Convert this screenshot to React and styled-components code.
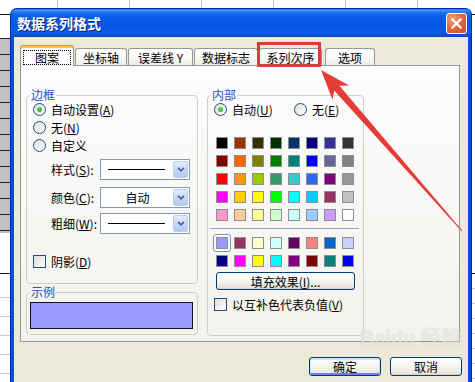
import React from 'react';
import styled, { createGlobalStyle, css } from 'styled-components';

const FONT = '"Noto Sans CJK SC", "Noto Sans", sans-serif';

const Global = createGlobalStyle`
  html, body { margin: 0; padding: 0; background: #fff; }
  body { font-family: ${FONT}; font-size: 12px; color: #000; }
  * { box-sizing: border-box; }
`;

const Screen = styled.div`
  position: relative;
  width: 475px;
  height: 382px;
  overflow: hidden;
  display: flex;
  align-items: flex-start;
  background: #fff linear-gradient(to right, #c4c4c4 1px, transparent 1px) 57px 0 / 72px 100% repeat-x;
`;

const LeftStrip = styled.div`
  flex: none;
  width: 10px;
  height: 382px;
  background:
    linear-gradient(#1a1a1a, #1a1a1a) 0 14px / 100% 1px no-repeat,
    repeating-linear-gradient(#202020 0 1px, transparent 1px 16px) 0 38px / 100% 195px no-repeat,
    linear-gradient(#c0c0c0, #c0c0c0) 0 38px / 100% 195px no-repeat,
    linear-gradient(#1a1a1a, #1a1a1a) 0 273px / 100% 1px no-repeat,
    repeating-linear-gradient(#c8c8c8 0 1px, transparent 1px 19px) 0 297px / 100% 90px no-repeat,
    #fff;
`;

const RightStrip = styled.div`
  flex: none;
  width: 3px;
  height: 382px;
  background:
    linear-gradient(#1a1a1a, #1a1a1a) 0 14px / 100% 1px no-repeat,
    linear-gradient(#1a1a1a, #1a1a1a) 0 273px / 100% 1px no-repeat,
    repeating-linear-gradient(#c8c8c8 0 1px, transparent 1px 15px) 0 288px / 100% 100px no-repeat,
    #fff;
`;

const Window = styled.div`
  flex: none;
  width: 462px;
  height: 374px;
  margin-top: 8px;
  display: flex;
  flex-direction: column;
  border: 1px solid #0029a8;
  border-bottom: none;
  border-radius: 7px 7px 0 0;
  background: #0b4fd8;
  overflow: hidden;
`;

const TitleBar = styled.div`
  flex: none;
  height: 28px;
  display: flex;
  align-items: center;
  justify-content: space-between;
  padding: 0 4px 0 6px;
  background: linear-gradient(
    to bottom,
    #2b7cf0 0%,
    #3d8ffb 6%,
    #1a6cf0 14%,
    #0a5ce6 30%,
    #0656e2 60%,
    #0a5ce8 82%,
    #0a50d2 94%,
    #0a46c0 100%
  );
`;

const Title = styled.div`
  color: #fff;
  font-family: ${FONT};
  font-weight: 700;
  font-size: 14px;
  line-height: 16px;
  text-shadow: 1px 1px 0 #0a1d7a;
`;

const CloseButton = styled.div`
  width: 21px;
  height: 21px;
  border: 1px solid #fff;
  border-radius: 3px;
  display: grid;
  place-items: center;
  background: radial-gradient(circle at 30% 25%, #f0a085 0%, #e26a45 45%, #cc4a22 100%);
`;

const Body = styled.div`
  flex: 1;
  margin: 0 3px;
  background: #ece9d8;
  display: flex;
  flex-direction: column;
  padding: 8px 8px 0 6px;
`;

const TabStrip = styled.div`
  display: flex;
  align-items: flex-end;
  gap: 1px;
  height: 21px;
  margin-bottom: -1px;
`;

const Tab = styled.div`
  position: relative;
  z-index: ${(p) => (p.$active ? 2 : 0)};
  flex: none;
  width: ${(p) => p.$w}px;
  height: ${(p) => (p.$active ? 21 : 18)}px;
  margin-left: ${(p) => p.$ml || 0}px;
  border: 1px solid #919b9c;
  border-bottom: none;
  border-radius: 3px 3px 0 0;
  display: flex;
  align-items: center;
  justify-content: center;
  font-size: 12px;
  line-height: 13px;
  white-space: nowrap;
  background: linear-gradient(#ffffff 0%, #fafaf8 45%, #ecebe5 100%);
  ${(p) =>
    p.$active &&
    css`
      background: linear-gradient(#ffffff, #fcfcfe);
      border-top: 1px solid #e68b2c;
      box-shadow: inset 0 2px 0 #ffc73c;
      padding-top: 2px;
    `}
`;

const Focus = styled.span`
  padding: 0 11px;
  line-height: 13px;
  outline: 1px dotted #000;
`;

const Panel = styled.div`
  position: relative;
  z-index: 1;
  width: 440px;
  height: 277px;
  border: 1px solid #919b9c;
  background: linear-gradient(#fcfcfe, #f3f2ec);
  display: flex;
  align-items: flex-start;
  gap: 9px;
  padding: 22px 0 0 5px;
`;

const Column = styled.div`
  flex: none;
  width: ${(p) => p.$w}px;
  display: flex;
  flex-direction: column;
  gap: 1px;
`;

const Group = styled.fieldset`
  margin: 0;
  padding: 0;
  min-width: 0;
  width: 100%;
  ${(p) => p.$h && `height: ${p.$h}px;`}
  border: 1px solid #d0d0bf;
  border-radius: 4px;
`;

const Legend = styled.legend`
  margin-left: 3px;
  padding: 0 1px;
  font-size: 12px;
  line-height: 14px;
  color: #1f4fbf;
`;

const GroupBody = styled.div`
  display: flex;
  flex-direction: column;
  padding: ${(p) => p.$pad};
`;

const OptionRow = styled.label`
  display: flex;
  align-items: center;
  gap: 5px;
  height: ${(p) => p.$h || 15}px;
  margin-top: ${(p) => p.$mt || 0}px;
  margin-left: ${(p) => p.$ml || 0}px;
  font-size: 12px;
  line-height: 13px;
  white-space: nowrap;
`;

const RadioPair = styled.div`
  display: grid;
  grid-template-columns: 80px auto;
  margin-left: 1px;
`;

const RadioCircle = styled.span`
  flex: none;
  width: 13px;
  height: 13px;
  border-radius: 50%;
  border: 1px solid #1c5180;
  background: linear-gradient(135deg, #dcdcd7, #ffffff);
  display: grid;
  place-items: center;
  &::after {
    content: '';
    width: 5px;
    height: 5px;
    border-radius: 50%;
    background: ${(p) => (p.$on ? 'radial-gradient(circle at 35% 35%, #62dc5e, #21a121)' : 'transparent')};
  }
`;

const CheckBox = styled.span`
  flex: none;
  width: 13px;
  height: 13px;
  border: 1px solid #1c5180;
  background: linear-gradient(135deg, #dcdcd7, #ffffff);
`;

const SelectRow = styled.div`
  display: flex;
  align-items: center;
  height: 21px;
  margin-top: ${(p) => p.$mt}px;
  padding-left: 18px;
`;

const SelectLabel = styled.span`
  width: 49px;
  font-size: 12px;
  line-height: 13px;
  white-space: nowrap;
`;

const Select = styled.div`
  width: 90px;
  height: 21px;
  border: 1px solid #7f9db9;
  background: #fff;
  display: flex;
  padding: 1px;
`;

const SelectValue = styled.div`
  flex: 1;
  display: flex;
  align-items: center;
  justify-content: ${(p) => (p.$center ? 'center' : 'flex-start')};
  padding-left: ${(p) => (p.$center ? 0 : 6)}px;
  font-size: 12px;
  line-height: 13px;
`;

const LineSample = styled.span`
  width: 57px;
  height: 1px;
  background: #000;
`;

const DropButton = styled.span`
  width: 15px;
  border: 1px solid #b9cdf5;
  border-radius: 2px;
  background: linear-gradient(#e4ecfd, #c2d4fa 60%, #b3c8f5);
  display: grid;
  place-items: center;
`;

const SwatchGrid = styled.div`
  display: grid;
  grid-template-columns: repeat(8, 18px);
  grid-auto-rows: 18px;
  margin-top: ${(p) => p.$mt}px;
`;

const Cell = styled.span`
  display: grid;
  place-items: center;
  border: 1px solid ${(p) => (p.$selected ? '#7d92b0' : 'transparent')};
  border-radius: 3px;
  box-shadow: ${(p) => (p.$selected ? 'inset 0 0 0 1px #ffffff' : 'none')};
`;

const Swatch = styled.span`
  width: 12px;
  height: 12px;
  border: 1px solid #8e8e8e;
  background: ${(p) => p.$c};
`;

const Separator = styled.div`
  width: 149px;
  height: 1px;
  margin: 4px 0 0 -3px;
  background: #93a8bd;
`;

const PushButton = styled.div`
  flex: none;
  width: ${(p) => p.$w}px;
  height: ${(p) => p.$h}px;
  margin: ${(p) => p.$m || 0};
  border: 1px solid #003c74;
  border-radius: 3px;
  display: flex;
  align-items: center;
  justify-content: center;
  font-size: 12px;
  line-height: 13px;
  white-space: nowrap;
  background: linear-gradient(#ffffff 0%, #f6f5f1 45%, #e9e7dd 88%, #d6d0c5 100%);
  box-shadow: ${(p) => (p.$default ? 'inset 0 1px 0 1px #cee7ff, inset 0 -1px 0 1px #6982ee' : 'none')};
`;

const Preview = styled.div`
  width: 163px;
  height: 27px;
  background: #9999ff;
  border: 1px solid #10102a;
`;

const ButtonRow = styled.div`
  display: flex;
  justify-content: flex-end;
  gap: 9px;
  margin-top: 15px;
  margin-right: -2px;
`;

const Highlight = styled.div`
  position: absolute;
  left: 257px;
  top: 42px;
  width: 64px;
  height: 25px;
  border: 3px solid #dc3b3b;
  z-index: 5;
  pointer-events: none;
`;

const ArrowLayer = styled.svg`
  position: absolute;
  left: 0;
  top: 0;
  z-index: 6;
  pointer-events: none;
`;

const Watermark = styled.div`
  position: absolute;
  left: 360px;
  top: 327px;
  z-index: 4;
  font-family: "Liberation Sans", ${FONT};
  font-weight: 700;
  font-size: 20px;
  line-height: 22px;
  color: rgba(255, 255, 255, 0.5);
  text-shadow: 0 0 1px rgba(120, 120, 120, 0.3);
  white-space: nowrap;
  pointer-events: none;
`;

const palette = [
  ['#000000', '#993300', '#333300', '#003300', '#003366', '#000080', '#333399', '#333333'],
  ['#800000', '#FF6600', '#808000', '#008000', '#008080', '#0000FF', '#666699', '#808080'],
  ['#FF0000', '#FF9900', '#99CC00', '#339966', '#33CCCC', '#3366FF', '#800080', '#969696'],
  ['#FF00FF', '#FFCC00', '#FFFF00', '#00FF00', '#00FFFF', '#00CCFF', '#993366', '#C0C0C0'],
  ['#FF99CC', '#FFCC99', '#FFFF99', '#CCFFCC', '#CCFFFF', '#99CCFF', '#CC99FF', '#FFFFFF'],
];
const chartFills = ['#9999FF', '#993366', '#FFFFCC', '#CCFFFF', '#660066', '#FF8080', '#0066CC', '#CCCCFF'];
const chartLines = ['#000080', '#FF00FF', '#FFFF00', '#00FFFF', '#800080', '#800000', '#008080', '#0000FF'];

const tabs = [
  { label: '图案', w: 54, active: true },
  { label: '坐标轴', w: 52 },
  { label: '误差线 Y', w: 65 },
  { label: '数据标志', w: 64 },
  { label: '系列次序', w: 63 },
  { label: '选项', w: 50, ml: 2 },
];

const Chevron = () => (
  <svg width="8" height="5" viewBox="0 0 8 5">
    <path d="M1 0.8 L4 3.8 L7 0.8" fill="none" stroke="#4d6185" strokeWidth="1.7" />
  </svg>
);

const Combo = ({ children, center }) => (
  <Select>
    <SelectValue $center={center}>{children}</SelectValue>
    <DropButton>
      <Chevron />
    </DropButton>
  </Select>
);

const Arrow = () => (
  <ArrowLayer width="475" height="382" viewBox="0 0 475 382">
    <polygon
      points="321,70 349.1,85.4 339.4,85.8 462.4,230.7 461.6,231.3 334.2,90.4 332.5,99.8"
      fill="#e63c37"
    />
  </ArrowLayer>
);

export default function App() {
  return (
    <>
      <Global />
      <Screen>
        <LeftStrip />
        <Window>
          <TitleBar>
            <Title>数据系列格式</Title>
            <CloseButton>
              <svg width="13" height="13" viewBox="0 0 13 13">
                <path d="M2.5 2.5 L10.5 10.5 M10.5 2.5 L2.5 10.5" stroke="#fff" strokeWidth="2.2" strokeLinecap="square" />
              </svg>
            </CloseButton>
          </TitleBar>
          <Body>
            <TabStrip>
              {tabs.map((t) => (
                <Tab key={t.label} $w={t.w} $active={t.active} $ml={t.ml}>
                  {t.active ? <Focus>{t.label}</Focus> : t.label}
                </Tab>
              ))}
            </TabStrip>
            <Panel>
              <Column $w={172}>
                <Group $h={196}>
                  <Legend>边框</Legend>
                  <GroupBody $pad="0 0 0 6px">
                    <OptionRow>
                      <RadioCircle $on />
                      <span>自动设置(<u>A</u>)</span>
                    </OptionRow>
                    <OptionRow $mt={3}>
                      <RadioCircle />
                      <span>无(<u>N</u>)</span>
                    </OptionRow>
                    <OptionRow $mt={3}>
                      <RadioCircle />
                      <span>自定义</span>
                    </OptionRow>
                    <SelectRow $mt={6}>
                      <SelectLabel>样式(<u>S</u>):</SelectLabel>
                      <Combo>
                        <LineSample />
                      </Combo>
                    </SelectRow>
                    <SelectRow $mt={7}>
                      <SelectLabel>颜色(<u>C</u>):</SelectLabel>
                      <Combo center>自动</Combo>
                    </SelectRow>
                    <SelectRow $mt={5}>
                      <SelectLabel>粗细(<u>W</u>):</SelectLabel>
                      <Combo>
                        <LineSample />
                      </Combo>
                    </SelectRow>
                    <OptionRow $mt={20}>
                      <CheckBox />
                      <span>阴影(<u>D</u>)</span>
                    </OptionRow>
                  </GroupBody>
                </Group>
                <Group>
                  <Legend>示例</Legend>
                  <GroupBody $pad="3px 4px 5px 3px">
                    <Preview />
                  </GroupBody>
                </Group>
              </Column>
              <Column $w={157}>
                <Group $h={248}>
                  <Legend>内部</Legend>
                  <GroupBody $pad="0 5px">
                    <RadioPair>
                      <OptionRow>
                        <RadioCircle $on />
                        <span>自动(<u>U</u>)</span>
                      </OptionRow>
                      <OptionRow>
                        <RadioCircle />
                        <span>无(<u>E</u>)</span>
                      </OptionRow>
                    </RadioPair>
                    <SwatchGrid $mt={17}>
                      {palette.flat().map((c, i) => (
                        <Cell key={i}>
                          <Swatch $c={c} />
                        </Cell>
                      ))}
                    </SwatchGrid>
                    <Separator />
                    <SwatchGrid $mt={5}>
                      {chartFills.map((c, i) => (
                        <Cell key={'f' + i} $selected={i === 0}>
                          <Swatch $c={c} />
                        </Cell>
                      ))}
                      {chartLines.map((c, i) => (
                        <Cell key={'l' + i}>
                          <Swatch $c={c} />
                        </Cell>
                      ))}
                    </SwatchGrid>
                    <PushButton $w={139} $h={18} $m="2px 0 0 3px">
                      填充效果(<u>I</u>)...
                    </PushButton>
                    <OptionRow $mt={6} $h={16} $ml={1}>
                      <CheckBox />
                      <span>以互补色代表负值(<u>V</u>)</span>
                    </OptionRow>
                  </GroupBody>
                </Group>
              </Column>
            </Panel>
            <ButtonRow>
              <PushButton $w={72} $h={19} $default>
                确定
              </PushButton>
              <PushButton $w={72} $h={19}>
                取消
              </PushButton>
            </ButtonRow>
          </Body>
        </Window>
        <RightStrip />
        <Highlight />
        <Arrow />
        <Watermark>Baidu 经验</Watermark>
      </Screen>
    </>
  );
}
